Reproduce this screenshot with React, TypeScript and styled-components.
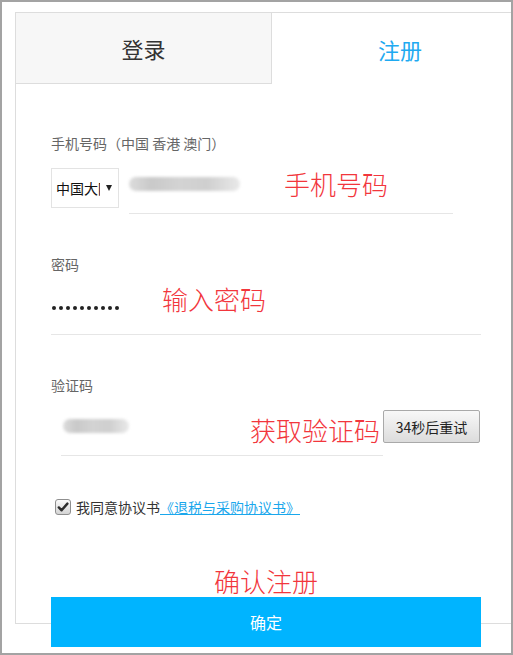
import styled, { createGlobalStyle } from "styled-components";

const GlobalStyle = createGlobalStyle`
  html, body {
    margin: 0;
    padding: 0;
    background: #fff;
  }
  body {
    font-family: "Noto Sans CJK SC", "Noto Sans", sans-serif;
  }
`;

const Frame = styled.div`
  width: 513px;
  height: 655px;
  box-sizing: border-box;
  border: 2px solid #a3a3a3;
  padding: 10px 0 0 13px;
  overflow: hidden;
  background: #fff;
`;

const Card = styled.div`
  width: 512px;
  height: 610px;
  border: 1px solid #dddddd;
  border-right: none;
`;

const TabRow = styled.div`
  display: flex;
  height: 71px;
`;

const Tab = styled.div<{ $active?: boolean }>`
  width: 256px;
  flex-shrink: 0;
  box-sizing: border-box;
  display: flex;
  align-items: center;
  justify-content: center;
  font-size: 22px;
  color: ${({ $active }) => ($active ? "#1eaaf1" : "#333")};
  background: ${({ $active }) => ($active ? "#fff" : "#f7f7f7")};
  border-right: ${({ $active }) => ($active ? "none" : "1px solid #dddddd")};
  border-bottom: ${({ $active }) => ($active ? "none" : "1px solid #dddddd")};
`;

const Form = styled.div`
  padding: 49px 0 0 35px;
`;

const Group = styled.div`
  & + & {
    margin-top: 40px;
  }
`;

const Label = styled.div`
  font-size: 14px;
  line-height: 20px;
  color: #666;
  margin-bottom: 15px;
`;

const Row = styled.div`
  position: relative;
  display: flex;
  align-items: flex-start;
  height: 46px;
`;

const SelectBox = styled.div`
  width: 68px;
  height: 40px;
  box-sizing: border-box;
  border: 1px solid #e3e3e3;
  display: flex;
  align-items: center;
  padding-left: 4px;
  font-size: 14px;
  color: #111;
`;

const SelectText = styled.span`
  width: 44px;
  overflow: hidden;
  white-space: nowrap;
`;

const Caret = styled.span`
  width: 0;
  height: 0;
  margin-left: 6px;
  border-left: 3px solid transparent;
  border-right: 3px solid transparent;
  border-top: 6px solid #222;
`;

const LineInput = styled.div<{ $width: number; $offset?: number }>`
  width: ${({ $width }) => $width}px;
  margin-left: ${({ $offset = 0 }) => $offset}px;
  height: 46px;
  box-sizing: border-box;
  border-bottom: 1px solid #e6e6e6;
`;

const Blob = styled.div<{ $width: number; $offset?: number }>`
  width: ${({ $width }) => $width}px;
  margin-left: ${({ $offset = 0 }) => $offset}px;
  margin-top: 9px;
  height: 14px;
  border-radius: 7px;
  background: linear-gradient(
    90deg,
    #dcdcdc 0%,
    #c9c9c9 20%,
    #d3d3d3 45%,
    #cfcfcf 70%,
    #e9e9e9 100%
  );
  filter: blur(1.5px);
`;

const Dots = styled.div`
  display: flex;
  gap: 3px;
  margin: 17px 0 0 1px;
`;

const Dot = styled.span`
  width: 4px;
  height: 4px;
  border-radius: 50%;
  background: #222;
`;

const CodeButton = styled.button`
  width: 97px;
  height: 33px;
  padding: 0;
  border: 1px solid #a9a9a9;
  border-radius: 2px;
  background: linear-gradient(#f8f8f8, #dcdcdc);
  font-family: inherit;
  font-size: 14px;
  color: #222;
`;

const AgreeRow = styled.div`
  display: flex;
  align-items: center;
  height: 20px;
  margin-top: 41px;
  padding-left: 4px;
  font-size: 14px;
  color: #333;
`;

const CheckBox = styled.span`
  width: 16px;
  height: 16px;
  box-sizing: border-box;
  border: 1px solid #8f8f8f;
  border-radius: 3px;
  background: linear-gradient(#fbfbfb, #d4d4d4);
  display: flex;
  align-items: center;
  justify-content: center;
  margin-right: 5px;
`;

const Link = styled.a`
  color: #1aa7ec;
  text-decoration: underline;
`;

const Submit = styled.div`
  position: relative;
  margin-top: 80px;
`;

const SubmitButton = styled.button`
  width: 430px;
  height: 50px;
  border: none;
  padding: 0;
  background: #00b4ff;
  color: #fff;
  font-family: inherit;
  font-size: 16px;
`;

const Annotation = styled.span<{ $left: number; $top: number }>`
  position: absolute;
  left: ${({ $left }) => $left}px;
  top: ${({ $top }) => $top}px;
  font-size: 26px;
  line-height: 30px;
  font-weight: 300;
  color: #f2363c;
  white-space: nowrap;
  pointer-events: none;
`;

export default function App() {
  return (
    <>
      <GlobalStyle />
      <Frame>
        <Card>
          <TabRow>
            <Tab>登录</Tab>
            <Tab $active>注册</Tab>
          </TabRow>
          <Form>
            <Group>
              <Label>手机号码（中国 香港 澳门）</Label>
              <Row>
                <SelectBox>
                  <SelectText>中国大陆</SelectText>
                  <Caret />
                </SelectBox>
                <LineInput $width={324} $offset={10}>
                  <Blob $width={111} />
                </LineInput>
                <Annotation $left={233} $top={1}>手机号码</Annotation>
              </Row>
            </Group>
            <Group>
              <Label>密码</Label>
              <Row>
                <LineInput $width={430}>
                  <Dots>
                    {Array.from({ length: 10 }, (_, i) => (
                      <Dot key={i} />
                    ))}
                  </Dots>
                </LineInput>
                <Annotation $left={111} $top={-5}>输入密码</Annotation>
              </Row>
            </Group>
            <Group>
              <Label>验证码</Label>
              <Row>
                <LineInput $width={322} $offset={10}>
                  <Blob $width={66} $offset={2} />
                </LineInput>
                <CodeButton>34秒后重试</CodeButton>
                <Annotation $left={199} $top={5}>获取验证码</Annotation>
              </Row>
            </Group>
            <AgreeRow>
              <CheckBox>
                <svg width="12" height="12" viewBox="0 0 12 12">
                  <path
                    d="M1.8 6.4 L4.6 9.3 L10.4 2.6"
                    fill="none"
                    stroke="#2d2d2d"
                    strokeWidth="2.4"
                    strokeLinecap="round"
                    strokeLinejoin="round"
                  />
                </svg>
              </CheckBox>
              我同意协议书
              <Link>《退税与采购协议书》</Link>
            </AgreeRow>
            <Submit>
              <Annotation $left={163} $top={-31}>确认注册</Annotation>
              <SubmitButton>确定</SubmitButton>
            </Submit>
          </Form>
        </Card>
      </Frame>
    </>
  );
}
